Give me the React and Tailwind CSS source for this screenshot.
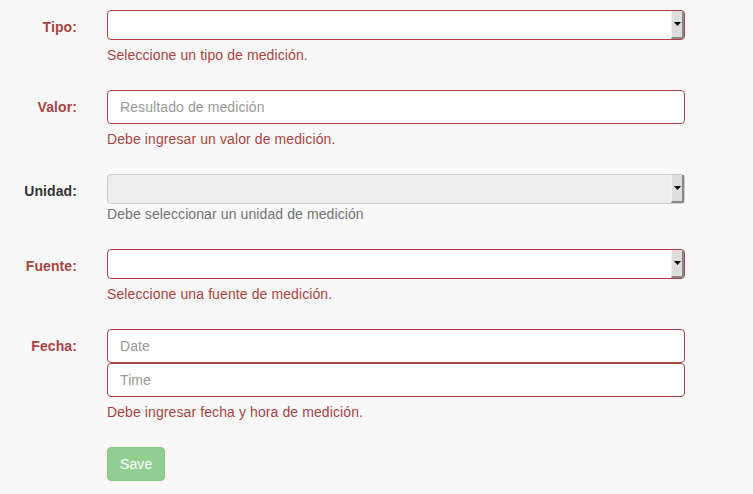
import React from "react";

const font = { fontFamily: '"Liberation Sans", Arial, sans-serif' };

function Label({ children, error = true }) {
  return (
    <div
      className={`w-[92px] shrink-0 pr-[15px] pt-[7px] text-right font-bold text-[14px] leading-[20px] ${
        error ? "text-[#a94442]" : "text-[#333333]"
      }`}
    >
      {children}
    </div>
  );
}

function FakeSelect({ disabled = false }) {
  return (
    <div
      className={`relative flex h-[30px] w-[578px] rounded-[4px] border ${
        disabled ? "border-[#cccccc] bg-[#eeeeee]" : "border-[#a94442] bg-white"
      }`}
    >
      <div className="flex-1" />
      <div className="flex h-full w-[13px] items-center justify-center border-l border-l-[#f2f2f2] border-r-2 border-r-[#888888] border-b-2 border-b-[#888888] bg-[#dddddd]">
        <svg width="7" height="4" viewBox="0 0 7 4">
          <path d="M0 0 H7 L3.5 4 Z" fill="#000" />
        </svg>
      </div>
    </div>
  );
}

function TextInput({ placeholder, className = "" }) {
  return (
    <div
      className={`flex h-[34px] w-[578px] items-center rounded-[4px] border border-[#a94442] bg-white px-[12px] text-[14px] text-[#999999] ${className}`}
    >
      {placeholder}
    </div>
  );
}

function Help({ children, error = true, className = "mt-[5px]" }) {
  return (
    <div
      className={`text-[14px] leading-[20px] ${className} ${
        error ? "text-[#a94442]" : "text-[#737373]"
      }`}
    >
      {children}
    </div>
  );
}

export default function App() {
  return (
    <div style={font} className="min-h-[494px] w-[753px] bg-[#f8f8f8] pt-[10px] tracking-[0.1px]">
      <div className="flex w-[700px]">
        <Label>Tipo:</Label>
        <div className="px-[15px]">
          <FakeSelect />
          <Help>Seleccione un tipo de medición.</Help>
        </div>
      </div>

      <div className="mt-[25px] flex w-[700px]">
        <Label>Valor:</Label>
        <div className="px-[15px]">
          <TextInput placeholder="Resultado de medición" />
          <Help>Debe ingresar un valor de medición.</Help>
        </div>
      </div>

      <div className="mt-[25px] flex w-[700px]">
        <Label error={false}>Unidad:</Label>
        <div className="px-[15px]">
          <FakeSelect disabled />
          <Help error={false} className="mt-0">
            Debe seleccionar un unidad de medición
          </Help>
        </div>
      </div>

      <div className="mt-[25px] flex w-[700px]">
        <Label>Fuente:</Label>
        <div className="px-[15px]">
          <FakeSelect />
          <Help>Seleccione una fuente de medición.</Help>
        </div>
      </div>

      <div className="mt-[25px] flex w-[700px]">
        <Label>Fecha:</Label>
        <div className="px-[15px]">
          <TextInput placeholder="Date" />
          <TextInput placeholder="Time" />
          <Help className="mt-[5px]">Debe ingresar fecha y hora de medición.</Help>
        </div>
      </div>

      <div className="mt-[25px] flex w-[700px]">
        <div className="w-[92px] shrink-0" />
        <div className="px-[15px]">
          <button
            type="button"
            className="h-[34px] rounded-[4px] border border-[#4cae4c] bg-[#5cb85c] px-[12px] text-[14px] leading-[20px] text-white opacity-65"
          >
            Save
          </button>
        </div>
      </div>
    </div>
  );
}
